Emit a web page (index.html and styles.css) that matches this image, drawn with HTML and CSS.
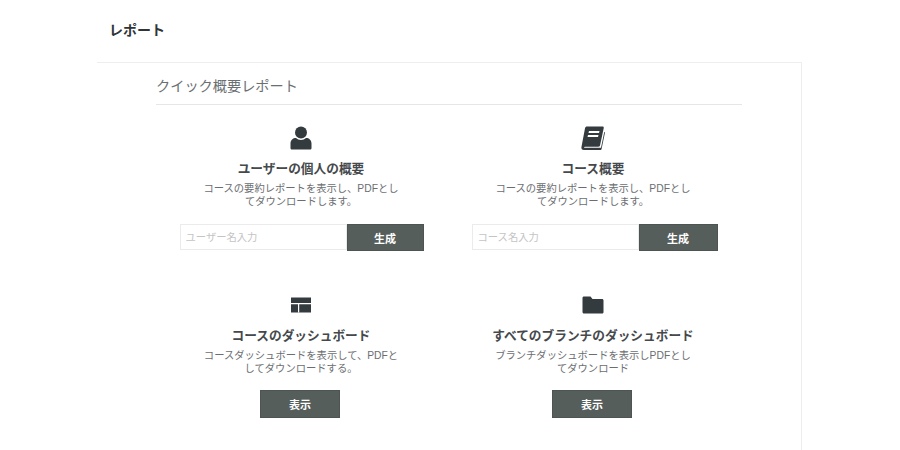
FILE: index.html
```html
<!DOCTYPE html>
<html lang="ja">
<head>
<meta charset="utf-8">
<title>レポート</title>
<link rel="stylesheet" href="styles.css">
</head>
<body>
<div class="page">
  <h1 class="page-title">レポート</h1>
  <div class="panel">
    <h2 class="section-title">クイック概要レポート</h2>
    <div class="report-grid">
      <section class="report">
        <svg class="icon" width="22" height="24" viewBox="0 0 22 24"><circle cx="11" cy="6.500" r="6" fill="#343b3f"/><path d="M0.500 22v-4.500c0-3.500 2.500-5.500 5.500-5.500 1.300 1.200 3 1.900 5 1.900s3.700-.7 5-1.900c3 0 5.500 2 5.500 5.500V22c0 1-.7 1.500-1.500 1.500H2c-.8 0-1.500-.5-1.500-1.500z" fill="#343b3f"/></svg>
        <h3 class="report-title">ユーザーの個人の概要</h3>
        <p class="report-text">コースの要約レポートを表示し、PDFとしてダウンロードします。</p>
        <form class="report-form">
          <input class="name-input" type="text" placeholder="ユーザー名入力">
          <button class="btn btn-form" type="button">生成</button>
        </form>
      </section>
      <section class="report">
        <svg class="icon" width="24" height="24" viewBox="0 0 24 24"><path d="M6 .5h15.500c1 0 1.500.7 1.200 1.700L19 19.500c-.2.800-.8 1.200-1.600 1.200H4c-1 0-1.300.8-.5 1h16.500l3.300-16 .7.800-3.500 16.700c-.1.500-.5.800-1 .8H3c-2 0-3-1.300-2.500-3.300L4 2.200C4.300 1.100 5 .5 6 .5z" fill="#343b3f"/><path d="M8 5h10.500l-.5 2H7.500zM7 9h10.500l-.5 2H6.500z" fill="#fff"/></svg>
        <h3 class="report-title">コース概要</h3>
        <p class="report-text">コースの要約レポートを表示し、PDFとしてダウンロードします。</p>
        <form class="report-form report-form-wide">
          <input class="name-input" type="text" placeholder="コース名入力">
          <button class="btn btn-form" type="button">生成</button>
        </form>
      </section>
      <section class="report">
        <svg class="icon" width="22" height="24" viewBox="0 0 22 24"><path d="M1 4.500h20v15H1z" fill="#343b3f"/><path d="M1 10h20v1.200H1zM8 11h1.200v8.500H8z" fill="#fff"/></svg>
        <h3 class="report-title">コースのダッシュボード</h3>
        <p class="report-text">コースダッシュボードを表示して、PDFとしてダウンロードする。</p>
        <button class="btn btn-view" type="button">表示</button>
      </section>
      <section class="report">
        <svg class="icon" width="22" height="24" viewBox="0 0 22 24"><path d="M2 3.500h6.500l2 2.500H20c1 0 1.500.6 1.500 1.500V19c0 1-.6 1.500-1.500 1.500H2c-1 0-1.500-.6-1.500-1.500V5c0-1 .6-1.500 1.500-1.500z" fill="#343b3f"/></svg>
        <h3 class="report-title">すべてのブランチのダッシュボード</h3>
        <p class="report-text">ブランチダッシュボードを表示しPDFとしてダウンロード</p>
        <button class="btn btn-view" type="button">表示</button>
      </section>
    </div>
  </div>
</div>
</body>
</html>
```

FILE: styles.css
```css
* { box-sizing: border-box; }
html, body { margin: 0; height: 100%; background: #fff; overflow: hidden; }
body { font-family: "Liberation Sans", "Noto Sans CJK JP", sans-serif; color: #343b3f; }
.page { padding: 21px 98px 0 97px; }
.page-title { margin: 0 0 22px 12px; font-size: 14px; line-height: 19px; font-weight: 700; color: #2f3437; }
.panel { height: 400px; padding: 13px 59px 0; border-top: 1px solid #eeeeee; border-right: 1px solid #eeeeee; }
.section-title { margin: 0 0 21px; padding-bottom: 8px; border-bottom: 1px solid #e6e6e6; font-size: 14.2px; line-height: 20px; font-weight: 400; color: #6b6f72; }
.report-grid { display: grid; grid-template-columns: 292px 292px; row-gap: 0; }
.report { display: flex; flex-direction: column; align-items: center; padding-right: 2px; }
.report:nth-child(1), .report:nth-child(2) { height: 167px; }
.icon { display: block; flex: none; }
.report-title { margin: 10px 0 0; font-size: 12.7px; line-height: 18px; font-weight: 700; color: #45494c; white-space: nowrap; }
.report-text { margin: 4px 0 0; width: 196px; font-size: 10.3px; line-height: 13px; text-align: center; color: #6b6e71; }
.report-form { display: flex; align-items: stretch; margin: 16px 0 0 1px; height: 27px; }
.report-form-wide { margin-left: 3px; }
.report-form-wide .btn-form { width: 79px; }
.name-input { width: 167px; height: 26px; padding: 0 5px; border: 1px solid #ebebeb; font: inherit; font-size: 10.3px; color: #333; background: #fff; outline: 0; border-radius: 0; }
.name-input::placeholder { color: #c4c4c4; opacity: 1; }
.btn { border: 1px solid #4d5553; background: #565e5c; color: #fff; font: inherit; font-size: 11px; font-weight: 700; padding: 0; border-radius: 0; }
.btn-form { width: 77px; }
.btn-view { width: 80px; height: 28px; margin: 15px 2px 0 0; }
```
